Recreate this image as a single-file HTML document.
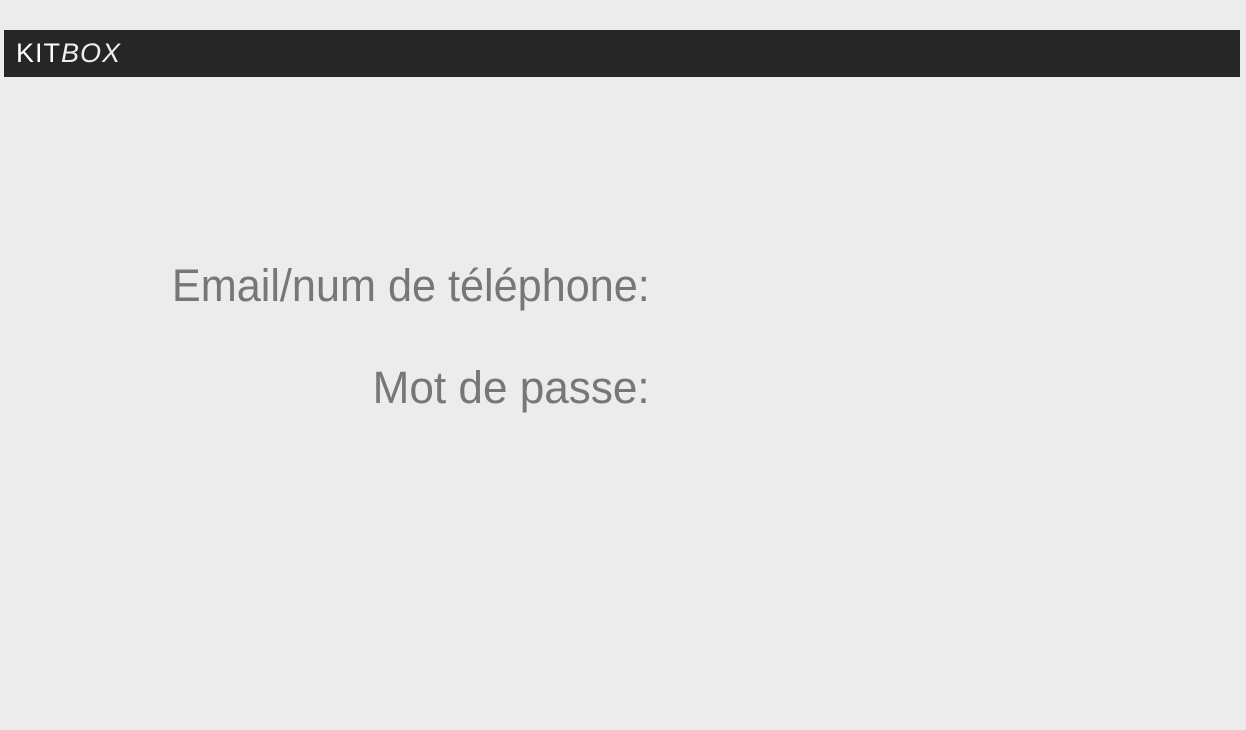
<!DOCTYPE html>
<html><head><meta charset="utf-8"><style>
html,body{margin:0;padding:0;background:#ececec;width:1246px;height:730px;overflow:hidden;font-family:"Liberation Sans",sans-serif;}
.bar{position:absolute;left:4px;top:30px;width:1236px;height:47px;background:#262626;}
.logo{position:absolute;left:16px;top:36px;font-size:27px;color:#fff;letter-spacing:1px;line-height:34px;}
.logo i{font-weight:normal;color:#eee;}
.lbl{position:absolute;right:596px;font-size:45px;color:#777;line-height:50px;white-space:nowrap;transform-origin:right center;}
</style></head><body>
<div class="bar"></div>
<div class="logo">KIT<i>BOX</i></div>
<div class="lbl" style="top:261px;transform:scaleX(0.96)">Email/num de téléphone:</div>
<div class="lbl" style="top:363px;transform:scaleX(0.98)">Mot de passe:</div>
</body></html>
